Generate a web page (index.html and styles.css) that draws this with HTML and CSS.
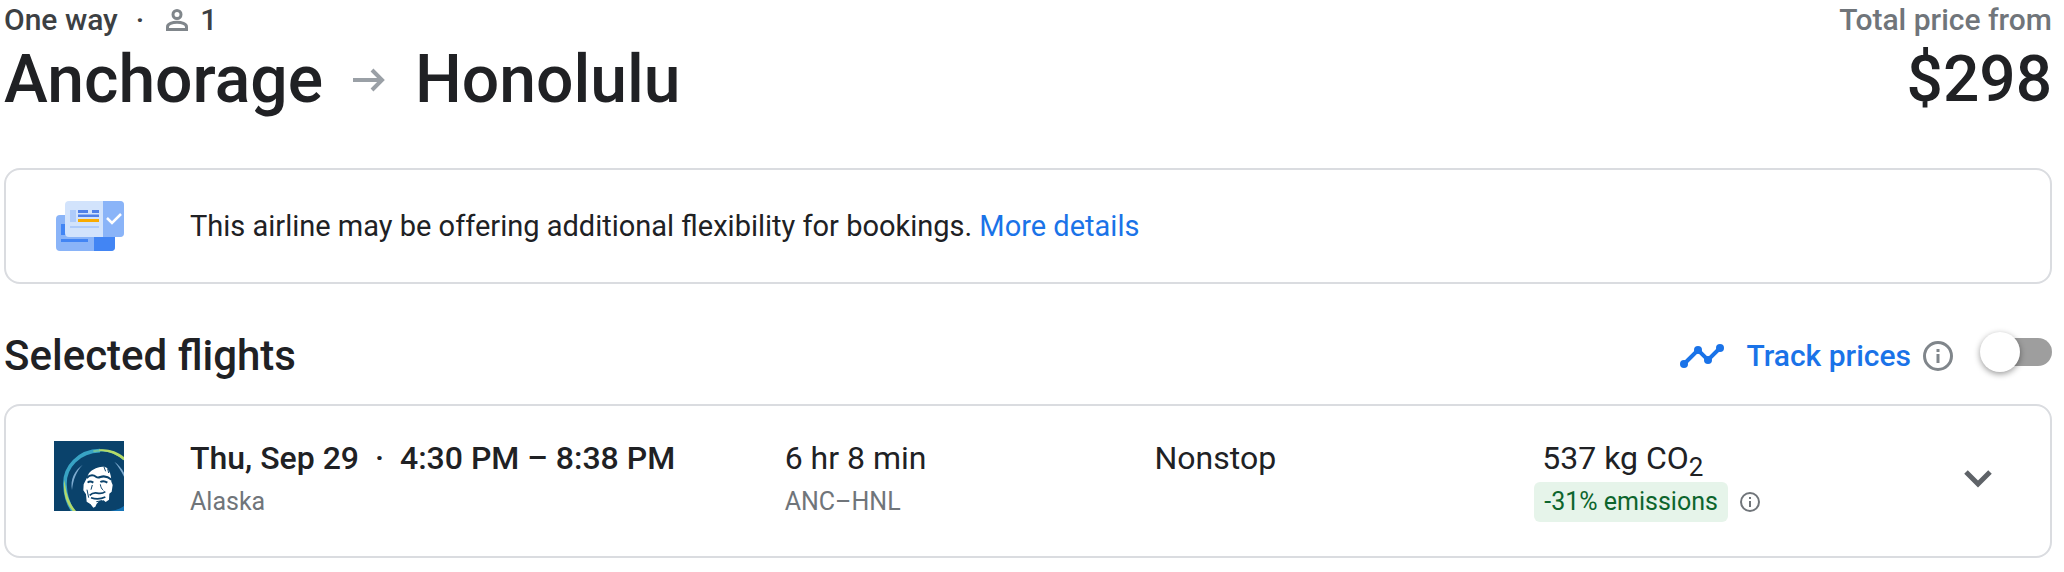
FILE: index.html
```html
<!DOCTYPE html>
<html lang="en">
<head>
    <meta charset="UTF-8">
    <meta name="viewport" content="width=device-width, initial-scale=1.0">
    <title>Anchorage to Honolulu</title>
    <link rel="stylesheet" href="styles.css">
</head>
<body>
    <main>
        <header class="trip">
            <div>
                <div class="trip-meta">
                    <span>One way</span>
                    <span class="dot">·</span>
                    <svg class="person" viewBox="0 0 22 22" aria-hidden="true">
                        <circle cx="11" cy="5.5" r="4"/>
                        <path d="M1.5 20.5v-2.6c0-3 5-4.6 9.500-4.600s9.500 1.600 9.500 4.600v2.600z"/>
                    </svg>
                    <span>1</span>
                </div>
                <h1>
                    <span>Anchorage</span>
                    <svg class="arrow" viewBox="0 0 32 24" role="img" aria-label="to">
                        <path d="M0 12h29M19 2l10 10-10 10"/>
                    </svg>
                    <span>Honolulu</span>
                </h1>
            </div>
            <div class="price">
                <div class="price-label">Total price from</div>
                <div class="price-value">$298</div>
            </div>
        </header>

        <section class="card notice">
            <svg class="tickets" viewBox="0 0 68 50" aria-hidden="true">
                <rect y="14" width="59" height="36" rx="4" fill="#8ab4f8"/>
                <path d="M38 36h21v10a4 4 0 0 1-4 4H38z" fill="#4285f4"/>
                <path d="M5 23h5v11H5zM5 38h27v3H5z" fill="#4285f4"/>
                <rect x="9" width="59" height="36" rx="4" fill="#d2e3fc"/>
                <path d="M47 0h17a4 4 0 0 1 4 4v28a4 4 0 0 1-4 4H47z" fill="#8ab4f8"/>
                <path d="M14 9h6v12h-6zM14 25h29v2H14z" fill="#aecbfa"/>
                <path d="M22 9h10v3H22zM36 9h7v3h-7zM22 13.500h21v2.500H22z" fill="#5080e8"/>
                <path d="M22 18h21v3H22z" fill="#f9ab00"/>
                <path d="M51 17l5 5 9-9" fill="none" stroke="#fff" stroke-width="2.500"/>
            </svg>
            <p>This airline may be offering additional flexibility for bookings. <a href="#">More details</a></p>
        </section>

        <div class="section-head">
            <h2>Selected flights</h2>
            <div class="track">
                <svg class="trend" viewBox="0 0 44 24" aria-hidden="true">
                    <path d="M4 20L18 6l10 10L40 4" fill="none" stroke="#1a73e8" stroke-width="4"/>
                    <g fill="#1a73e8">
                        <circle cx="4" cy="20" r="4"/>
                        <circle cx="18" cy="6" r="4"/>
                        <circle cx="28" cy="16" r="4"/>
                        <circle cx="40" cy="4" r="4"/>
                    </g>
                </svg>
                <label for="track">Track prices</label>
                <svg class="info" viewBox="0 0 30 30" aria-hidden="true">
                    <circle cx="15" cy="15" r="13.500" fill="none" stroke="#80868b" stroke-width="3"/>
                    <path d="M13.500 8h3v3h-3zM13.500 13h3v9h-3z" fill="#80868b"/>
                </svg>
                <input type="checkbox" role="switch" class="switch" id="track">
            </div>
        </div>

        <section class="card flight">
            <svg class="logo" viewBox="0 0 210 210" role="img" aria-label="Alaska">
                <rect width="210" height="210" fill="#0a426b"/>
                <path d="M138 29C75 30 30 78 33 133c1 31 9 55 24 77" fill="none" stroke="#38a3c4" stroke-width="11"/>
                <path d="M118 31c40-8 70 3 92 25" fill="none" stroke="#6fc3a0" stroke-width="6"/>
                <path d="M136 25c30-2 55 7 74 23v10c-22-18-43-27-74-29z" fill="#b4da68"/>
                <path d="M32 116c-6 35 2 68 24 94h10c-21-25-31-55-34-94z" fill="#b4da68"/>
                <path d="M86 71c-25 18-38 45-32 76 4-32 12-54 32-76z" fill="#7eabd0"/>
                <path d="M181 62c12 8 22 20 29 33v12c-8-17-17-31-29-45z" fill="#7eabd0"/>
                <path d="M167 210c17-2 31-6 43-15v15z" fill="#1675b8"/>
                <!-- face, then the dark lines over it -->
                <path d="M102 103c5-14 16-18 28-23 12-4 26-4 30 2l8 14 3 12 1 14 4 10-3 20-7 6-1 18-10 7-6-5-13 2-8 8-4 9-6 3-8-10-12-8-2-22-8-12 1-18 8-16z" fill="#fff"/>
                <g fill="none" stroke="#0a426b">
                    <path d="M98 111c9-9 20-10 29-3 4 3 8 2 12 0 11-4 22-2 34 8" stroke-width="6"/>
                    <path d="M101 125c5-5 11-4 17 0M139 123c7-4 14-3 21 2" stroke-width="6"/>
                    <path d="M115 132l-4 14M139 130c1 8 4 14 9 18" stroke-width="3"/>
                    <path d="M107 163c8-8 17-9 27-6 7 1 13 0 20-5" stroke-width="5"/>
                    <path d="M111 170c14 5 30 4 43-2" stroke-width="5"/>
                    <path d="M99 146l5 24M150 78l5 13M161 83l3 13M127 182l17-3" stroke-width="3"/>
                </g>
            </svg>
            <div class="cell">
                <div class="main-text strong">Thu, Sep 29 <span class="dot">·</span> 4:30 PM – 8:38 PM</div>
                <div class="sub-text">Alaska</div>
            </div>
            <div class="cell">
                <div class="main-text">6 hr 8 min</div>
                <div class="sub-text">ANC–HNL</div>
            </div>
            <div class="cell">
                <div class="main-text">Nonstop</div>
            </div>
            <div class="cell emissions">
                <div class="main-text">537 kg CO<sub>2</sub></div>
                <div class="badge-row">
                    <span class="badge">-31% emissions</span>
                    <svg class="info-small" viewBox="0 0 20 20" aria-hidden="true">
                        <circle cx="10" cy="10" r="9" fill="none" stroke="#70757a" stroke-width="2"/>
                        <path d="M9 5h2v2H9zM9 9h2v6H9z" fill="#70757a"/>
                    </svg>
                </div>
            </div>
            <button class="expand" type="button" aria-label="Flight details" aria-expanded="false">
                <svg viewBox="0 0 28 18" aria-hidden="true">
                    <path d="M2 2l12 12L26 2" fill="none" stroke="#5f6368" stroke-width="5"/>
                </svg>
            </button>
        </section>
    </main>
</body>
</html>
```

FILE: styles.css
```css
*{
    box-sizing: border-box;
}

body{
    margin: 0;
    background: #fff;
    color: #202124;
    font-family: "Google Sans", Roboto, sans-serif;
    font-size: 30px;
    line-height: 40px;
}

main{
    padding: 0 12px 0 4px;
}

h1, h2, p{
    margin: 0;
}

a{
    color: #1a73e8;
    text-decoration: none;
}

.trip{
    display: flex;
    justify-content: space-between;
    font-weight: 500;
}

.trip-meta{
    display: flex;
    align-items: center;
    color: #3c4043;
}

.trip-meta .dot{
    margin: 0 18px;
}

.person{
    width: 22px;
    height: 22px;
    margin: 0 12px 0 4px;
    fill: none;
    stroke: #80868b;
    stroke-width: 3;
}

h1{
    display: flex;
    align-items: center;
    gap: 30px;
    font-size: 66px;
    font-weight: 500;
    line-height: 80px;
}

.arrow{
    width: 32px;
    height: 24px;
    fill: none;
    stroke: #9aa0a6;
    stroke-width: 4;
}

.price{
    text-align: right;
}

.price-label{
    color: #70757a;
}

.price-value{
    font-size: 64px;
    line-height: 80px;
}

.card{
    border: 2px solid #dadce0;
    border-radius: 16px;
}

.notice{
    display: flex;
    align-items: center;
    gap: 66px;
    margin-top: 48px;
    padding: 31px 50px;
    font-size: 29px;
}

.tickets{
    width: 68px;
    height: 50px;
    flex: none;
}

.section-head{
    display: flex;
    align-items: center;
    justify-content: space-between;
    height: 72px;
    margin: 36px 0 12px;
}

h2{
    font-size: 42px;
    font-weight: 500;
}

.track{
    display: flex;
    align-items: center;
    color: #1a73e8;
    font-weight: 500;
}

.trend{
    width: 44px;
    height: 24px;
    margin-right: 22px;
}

.info{
    width: 30px;
    height: 30px;
    margin: 0 27px 0 12px;
}

.switch{
    appearance: none;
    position: relative;
    width: 72px;
    height: 28px;
    margin: 0 0 8px;
    background: linear-gradient(#9e9e9e, #9e9e9e) right / 56px 28px no-repeat;
    border-radius: 14px;
}

.switch::before{
    content: "";
    position: absolute;
    top: -6px;
    left: 0;
    width: 40px;
    height: 40px;
    border-radius: 50%;
    background: #fff;
    box-shadow: 0 2px 6px rgba(0, 0, 0, 0.4);
}

.flight{
    display: grid;
    grid-template-columns: 136px 119fr 74fr 76fr 84fr 48px;
    padding: 30px 48px 34px;
}

.logo{
    width: 70px;
    height: 70px;
    margin-top: 5px;
}

.cell{
    display: flex;
    flex-direction: column;
    gap: 2px;
}

.main-text{
    font-size: 32px;
    line-height: 44px;
}

.main-text .dot{
    margin: 0 8px;
}

.strong{
    font-weight: 500;
}

.sub-text{
    color: #70757a;
    font-size: 25px;
}

sub{
    font-size: 26px;
    line-height: 0;
}

.emissions .main-text{
    padding-left: 8px;
}

.badge-row{
    display: flex;
    align-items: center;
    gap: 12px;
}

.badge{
    padding: 0 10px;
    border-radius: 6px;
    background: #e6f4ea;
    color: #0d652d;
    font-size: 25px;
}

.info-small{
    width: 20px;
    height: 20px;
}

.expand{
    align-self: center;
    height: 48px;
    padding: 0;
    border: 0;
    background: none;
}

.expand svg{
    display: block;
    width: 28px;
    height: 18px;
    margin: 0 auto;
}
```
